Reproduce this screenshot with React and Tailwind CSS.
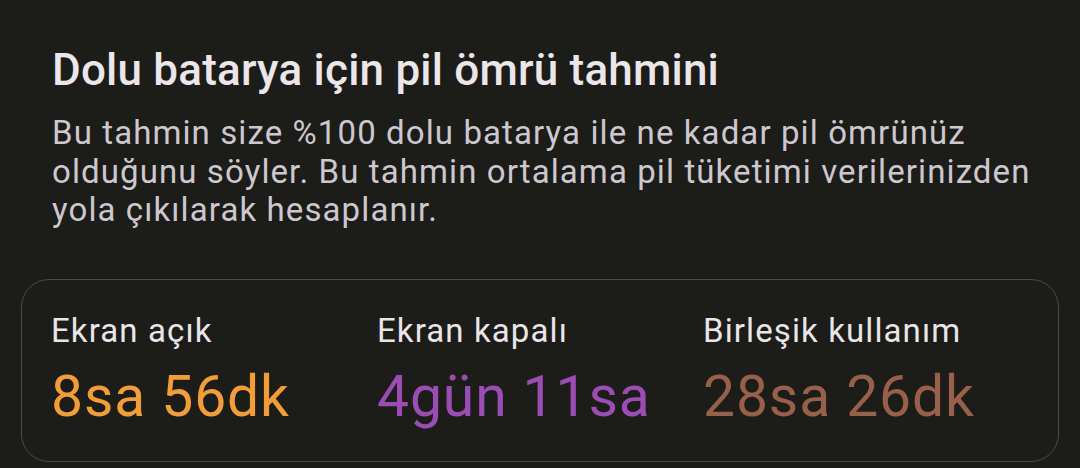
import React from "react";

const stats = [
  { label: "Ekran açık", value: "8sa 56dk", color: "text-[#f29e38]" },
  { label: "Ekran kapalı", value: "4gün 11sa", color: "text-[#9c4db5]" },
  { label: "Birleşik kullanım", value: "28sa 26dk", color: "text-[#97604a]" },
];

export default function App() {
  return (
    <div
      className="w-[1080px] h-[468px] overflow-hidden bg-[#1c1c18] px-[21px] pt-[44px]"
      style={{ fontFamily: "Roboto, 'Noto Sans', sans-serif" }}
    >
      <div className="px-[31px]">
        <h1 className="text-[44px] leading-[52px] font-medium tracking-[0.2px] text-[#ebe6ea]">
          Dolu batarya için pil ömrü tahmini
        </h1>
        <p className="mt-[18px] text-[33px] leading-[38.5px] tracking-[1.1px] text-[#cdc7cf] w-[1000px]">
          Bu tahmin size %100 dolu batarya ile ne kadar pil ömrünüz olduğunu söyler. Bu tahmin ortalama pil tüketimi verilerinizden yola çıkılarak hesaplanır.
        </p>
      </div>
      <div className="mt-[49px] w-[1038px] rounded-[28px] border-[1.5px] border-[#4b4b47] px-[29px] pt-[31px] pb-[32px] grid grid-cols-3">
        {stats.map((s) => (
          <div key={s.label} className="flex flex-col">
            <div className="text-[33px] leading-[40px] tracking-[1.1px] text-[#e9e5e8]">{s.label}</div>
            <div className={`mt-[14px] text-[57px] leading-[64px] tracking-[0.9px] ${s.color}`}>{s.value}</div>
          </div>
        ))}
      </div>
    </div>
  );
}
